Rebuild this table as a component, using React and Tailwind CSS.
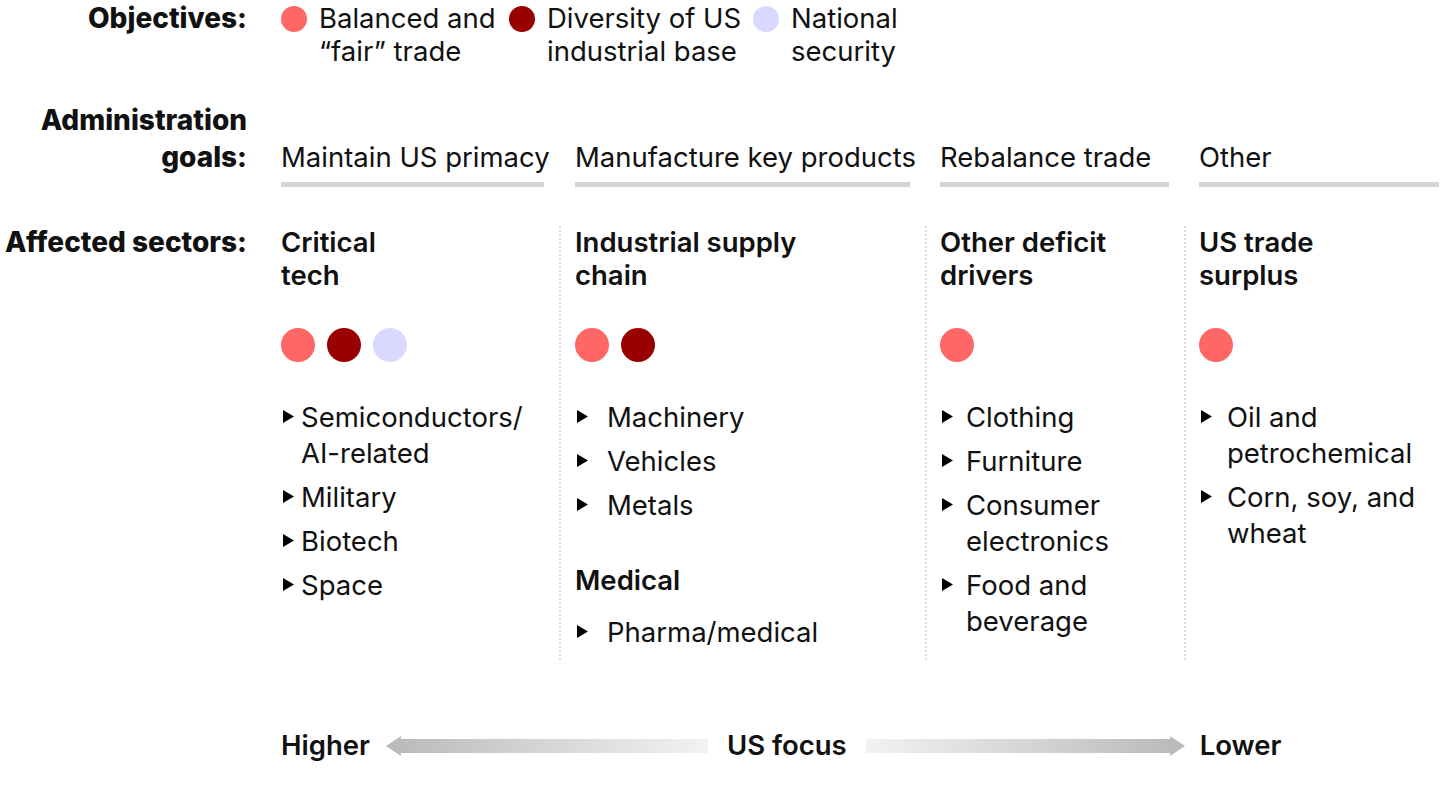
import React from 'react';

const CORAL = 'bg-[#ff6666]';
const MAROON = 'bg-[#990000]';
const LAVENDER = 'bg-[#d9d9ff]';

const OBJECTIVES = [
  { color: CORAL, lines: ['Balanced and', '\u201Cfair\u201D trade'], w: 'w-[228px]' },
  { color: MAROON, lines: ['Diversity of US', 'industrial base'], w: 'w-[244px]' },
  { color: LAVENDER, lines: ['National', 'security'], w: '' },
];

const COLUMNS = [
  {
    goal: 'Maintain US primacy',
    heading: ['Critical', 'tech'],
    dots: [CORAL, MAROON, LAVENDER],
    indent: 'w-[20px]',
    groups: [
      { items: [['Semiconductors/', 'AI-related'], ['Military'], ['Biotech'], ['Space']] },
    ],
    goalCls: 'pr-[15px]',
    secCls: 'pr-[15px]',
  },
  {
    goal: 'Manufacture key products',
    heading: ['Industrial supply', 'chain'],
    dots: [CORAL, MAROON],
    indent: 'w-[32px]',
    groups: [
      { items: [['Machinery'], ['Vehicles'], ['Metals']] },
      { title: 'Medical', items: [['Pharma/medical']] },
    ],
    goalCls: 'pl-[16px] pr-[15px]',
    secCls: 'pl-[14px] pr-[15px]',
  },
  {
    goal: 'Rebalance trade',
    heading: ['Other deficit', 'drivers'],
    dots: [CORAL],
    indent: 'w-[26px]',
    groups: [
      { items: [['Clothing'], ['Furniture'], ['Consumer', 'electronics'], ['Food and', 'beverage']] },
    ],
    goalCls: 'pl-[15px] pr-[15px]',
    secCls: 'pl-[13px] pr-[15px]',
  },
  {
    goal: 'Other',
    heading: ['US trade', 'surplus'],
    dots: [CORAL],
    indent: 'w-[28px]',
    groups: [
      { items: [['Oil and', 'petrochemical'], ['Corn, soy, and', 'wheat']] },
    ],
    goalCls: 'pl-[15px] pr-[1px]',
    secCls: 'pl-[13px]',
  },
];

const GRID = 'grid grid-cols-[278px_366px_259px_256px]';
const DIVIDER = 'border-l-2 border-dotted border-[#dcdcdc]';
const LABEL = 'w-[247px] shrink-0 text-right font-extrabold text-[28px]';

function Triangle() {
  return (
    <svg width="11" height="13" viewBox="0 0 11 13" className="shrink-0 mt-[11px]">
      <polygon points="0,0 11,6.5 0,13" fill="#000" />
    </svg>
  );
}

function Arrow({ dir, width }) {
  const id = `grad-${dir}`;
  const left = dir === 'left';
  const w = width;
  return (
    <svg width={w} height="24" viewBox={`0 0 ${w} 24`} className="shrink-0 block">
      <defs>
        <linearGradient id={id} x1="0" x2="1" y1="0" y2="0">
          <stop offset="0" stopColor={left ? '#b9b9b9' : '#f2f2f2'} />
          <stop offset="1" stopColor={left ? '#f2f2f2' : '#b9b9b9'} />
        </linearGradient>
      </defs>
      {left ? (
        <polygon points={`0,12 15,2 15,5 ${w},5 ${w},19 15,19 15,22`} fill={`url(#${id})`} />
      ) : (
        <polygon points={`0,5 ${w - 15},5 ${w - 15},2 ${w},12 ${w - 15},22 ${w - 15},19 0,19`} fill={`url(#${id})`} />
      )}
    </svg>
  );
}

export default function App() {
  return (
    <div className="w-[1440px] h-[810px] bg-white text-[#111] overflow-hidden font-['Inter',sans-serif] text-[27.5px]">
      {/* Objectives */}
      <div className="flex pt-[2px]">
        <div className={`${LABEL} leading-[33px]`}>Objectives:</div>
        <div className="ml-[34px] flex">
          {OBJECTIVES.map((o, i) => (
            <div key={i} className={`flex ${o.w}`}>
              <span className={`w-[26px] h-[26px] rounded-full shrink-0 mt-[4px] ${o.color}`} />
              <div className="ml-[12px] leading-[33px]">
                {o.lines.map((l, j) => (
                  <div key={j}>{l}</div>
                ))}
              </div>
            </div>
          ))}
        </div>
      </div>

      {/* Administration goals */}
      <div className="flex mt-[34px]">
        <div className={`${LABEL} leading-[37px]`}>
          Administration
          <br />
          goals:
        </div>
        <div className={`ml-[34px] pt-[37px] ${GRID}`}>
          {COLUMNS.map((c, i) => (
            <div key={i} className={c.goalCls}>
              <div className="leading-[37px] whitespace-nowrap">{c.goal}</div>
              <div className="mt-[6px] h-[5px] bg-[#d4d4d4]" />
            </div>
          ))}
        </div>
      </div>

      {/* Affected sectors */}
      <div className="flex mt-[39px]">
        <div className={`${LABEL} leading-[33px]`}>Affected sectors:</div>
        <div className={`ml-[34px] h-[434px] ${GRID}`}>
          {COLUMNS.map((c, i) => (
            <div key={i} className={`${c.secCls} ${i > 0 ? DIVIDER : ''}`}>
              <div className="font-semibold leading-[33px]">
                {c.heading[0]}
                <br />
                {c.heading[1]}
              </div>
              <div className="flex gap-[12px] mt-[36px]">
                {c.dots.map((d, j) => (
                  <span key={j} className={`w-[34px] h-[34px] rounded-full ${d}`} />
                ))}
              </div>
              {c.groups.map((g, gi) => (
                <div key={gi} className={gi === 0 ? 'mt-[37px]' : 'mt-[41px]'}>
                  {g.title && <div className="font-semibold leading-[33px] mb-[17px]">{g.title}</div>}
                  <div className="flex flex-col gap-[8px]">
                    {g.items.map((it, k) => (
                      <div key={k} className="flex">
                        <div className={`${c.indent} shrink-0 pl-[2px]`}>
                          <Triangle />
                        </div>
                        <div className="leading-[36px]">
                          {it.map((l, m) => (
                            <div key={m}>{l}</div>
                          ))}
                        </div>
                      </div>
                    ))}
                  </div>
                </div>
              ))}
            </div>
          ))}
        </div>
      </div>

      {/* US focus scale */}
      <div className="flex items-center mt-[69px] ml-[281px] font-semibold leading-[33px]">
        <span>Higher</span>
        <span className="ml-[16px]">
          <Arrow dir="left" width={322} />
        </span>
        <span className="ml-[19px]">US focus</span>
        <span className="ml-[19px]">
          <Arrow dir="right" width={319} />
        </span>
        <span className="ml-[15px]">Lower</span>
      </div>
    </div>
  );
}
